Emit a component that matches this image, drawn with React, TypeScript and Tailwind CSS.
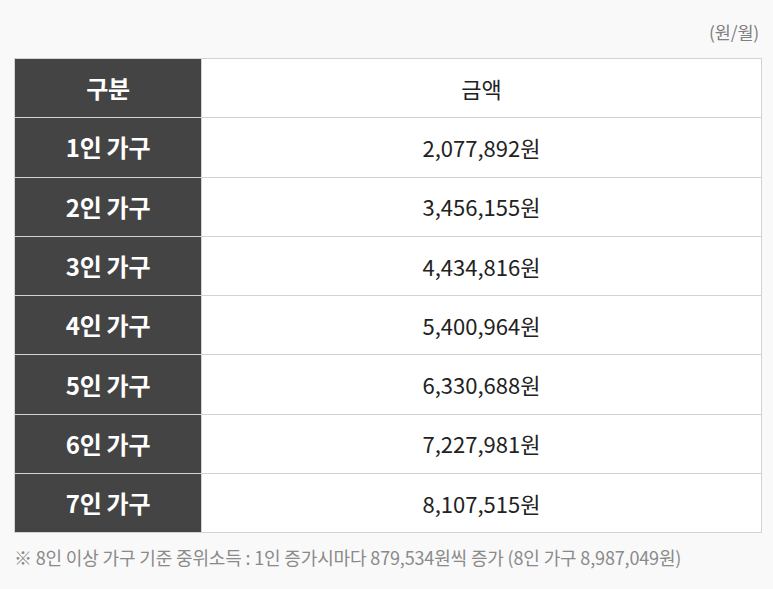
const ROWS = [
  { label: '1인 가구', amount: '2,077,892원' },
  { label: '2인 가구', amount: '3,456,155원' },
  { label: '3인 가구', amount: '4,434,816원' },
  { label: '4인 가구', amount: '5,400,964원' },
  { label: '5인 가구', amount: '6,330,688원' },
  { label: '6인 가구', amount: '7,227,981원' },
  { label: '7인 가구', amount: '8,107,515원' },
]

export default function App() {
  return (
    <div
      className="min-h-screen w-full bg-[#f9f9f9] px-[14px] pt-[19px]"
      style={{ fontFamily: '"Noto Sans CJK KR", "Noto Sans", sans-serif' }}
    >
      <p className="text-right text-[17.5px] leading-[26px] text-[#808080] tracking-[-0.2px]">(원/월)</p>

      <table className="mt-[13px] w-[748px] border-collapse border border-[#d3d3d3]">
        <tbody>
          <tr className="h-[59.3px]">
            <th className="w-[187px] bg-[#444444] border border-[#d3d3d3] text-[24px] font-bold text-white tracking-[-0.3px]">
              구분
            </th>
            <td className="bg-white border border-[#d3d3d3] text-center text-[22px] text-[#222] tracking-[0px]">
              금액
            </td>
          </tr>
          {ROWS.map((r) => (
            <tr key={r.label} className="h-[59.3px]">
              <th className="bg-[#444444] border border-[#d3d3d3] text-[24px] font-bold text-white tracking-[-0.3px]">
                {r.label}
              </th>
              <td className="bg-white border border-[#d3d3d3] text-center text-[22px] text-[#222] tracking-[0px]">
                {r.amount}
              </td>
            </tr>
          ))}
        </tbody>
      </table>

      <p className="mt-[11px] text-[18px] leading-[26px] text-[#8a8a8a] tracking-[-0.15px]">
        ※ 8인 이상 가구 기준 중위소득 : 1인 증가시마다 879,534원씩 증가 (8인 가구 8,987,049원)
      </p>
    </div>
  )
}
